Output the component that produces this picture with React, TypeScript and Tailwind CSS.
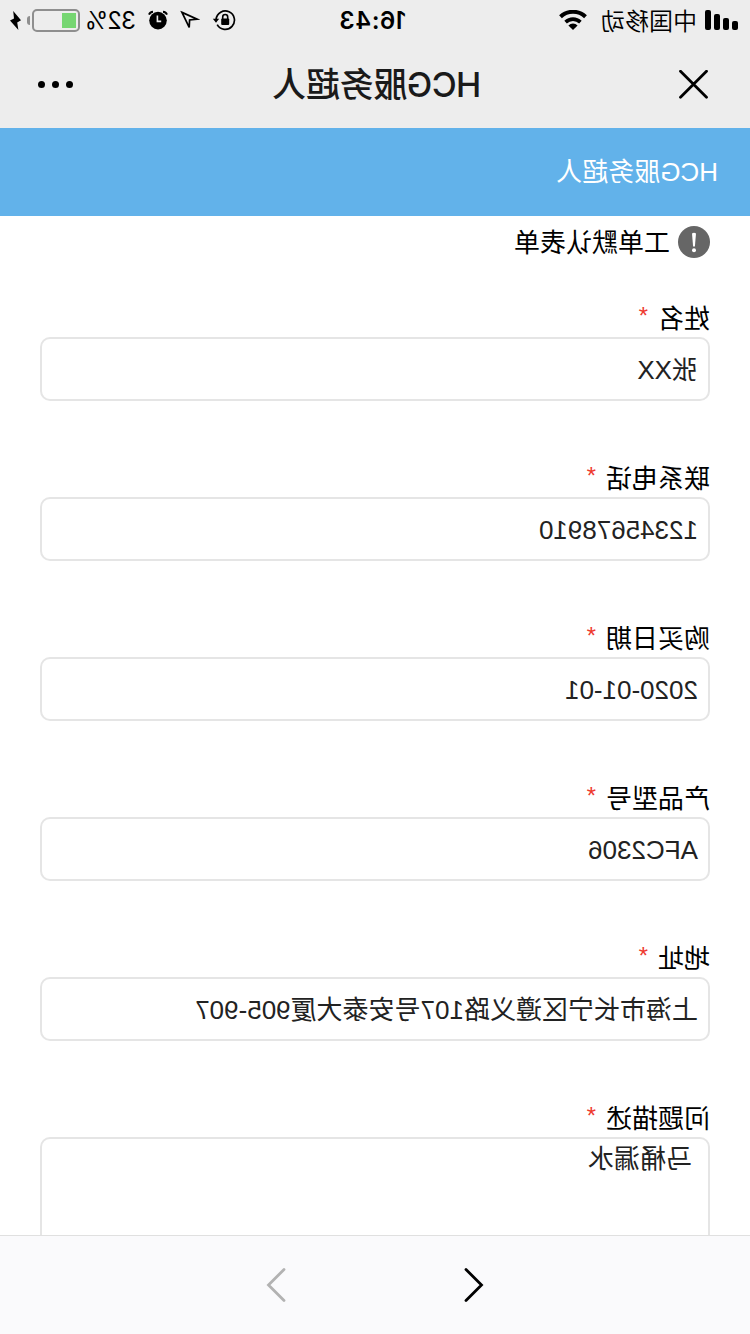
import type { ReactNode } from "react";

const fields = [
  { label: "姓名", value: "张XX" },
  { label: "联系电话", value: "12345678910" },
  { label: "购买日期", value: "2020-01-01" },
  { label: "产品型号", value: "AFC2306" },
  { label: "地址", value: "上海市长宁区遵义路107号安泰大厦905-907" },
];

function StatusBar() {
  return (
    <div className="flex h-10 items-center text-2xl leading-10 text-black">
      <div className="ml-3 flex h-5 items-end gap-[3px]">
        <span className="h-[9px] w-1.5 rounded-[2px] bg-black" />
        <span className="h-3 w-1.5 rounded-[2px] bg-black" />
        <span className="h-4 w-1.5 rounded-[2px] bg-black" />
        <span className="h-5 w-1.5 rounded-[2px] bg-black" />
      </div>
      <span className="ml-2 w-[96px] pt-[3px] font-[350] whitespace-nowrap">中国移动</span>
      <svg className="ml-[14px] shrink-0" width="28" height="20" viewBox="0 0 28 20" fill="none">
        <path d="M1.5 6.8a18 18 0 0 1 25 0" stroke="#000" strokeWidth="4" />
        <path d="M6.6 12.1a10.6 10.6 0 0 1 14.8 0" stroke="#000" strokeWidth="3.6" />
        <path d="M14 20l-4.6-4.6a6.4 6.4 0 0 1 9.2 0z" fill="#000" />
      </svg>
      <span className="ml-[153px] w-[68px] pt-0.5 font-['Inter',sans-serif] font-semibold tracking-[0.5px] whitespace-nowrap">
        16:43
      </span>
      <svg className="ml-[102px] shrink-0" width="24" height="24" viewBox="0 0 24 24" fill="none">
        <path d="M18.8 16.6a9.2 9.2 0 1 1 1.1-5.4" stroke="#000" strokeWidth="1.7" />
        <path d="M16.8 10.8h6.4l-3.2 4z" fill="#000" />
        <path d="M8.3 11.5V9a2.5 2.5 0 0 1 5 0v2.5" stroke="#000" strokeWidth="1.6" />
        <rect x="6.8" y="10.4" width="8" height="6.6" rx="1" fill="#000" />
      </svg>
      <svg className="ml-[12px] shrink-0" width="20" height="20" viewBox="0 0 20 20" fill="none">
        <path d="M18 2.4L2.8 9.2l7.6.8.4 7.4z" stroke="#000" strokeWidth="1.7" />
      </svg>
      <svg className="ml-[12px] shrink-0" width="20" height="20" viewBox="0 0 20 20" fill="none">
        <circle cx="10" cy="10.6" r="8.8" fill="#000" />
        <path d="M1 4.6Q2 2 5 1.8M19 4.6Q18 2 15 1.8" stroke="#000" strokeWidth="1.9" />
        <path d="M10.6 5.4v6H6.8" stroke="#ededed" strokeWidth="1.6" />
      </svg>
      <span className="ml-[12px] w-[56px] pt-0.5 font-['Inter',sans-serif] tracking-[-0.9px] whitespace-nowrap">32%</span>
      <div className="mt-px h-[23px] w-12 shrink-0 rounded-[5px] border-2 border-[#8e8e8e] p-[2px]">
        <div className="h-[15px] w-[14px] bg-[#76d672]" />
      </div>
      <span className="mt-px ml-[2px] h-[9px] w-[3px] rounded-r-full bg-[#8e8e8e]" />
      <svg className="ml-[6px] shrink-0" width="11" height="19" viewBox="0 0 11 19">
        <path d="M7.8 0L7 7.6l4 1.9L2.6 19l1.2-7.4L0 9.2z" fill="#000" />
      </svg>
    </div>
  );
}

function NavBar() {
  return (
    <div className="flex h-[88px] items-center justify-between pr-[38px] pl-[42px]">
      <svg width="29" height="29" viewBox="0 0 29 29">
        <path d="M1.5 1.2l26 26M27.5 1.2l-26 26" stroke="#000" strokeWidth="2.8" strokeLinecap="round" />
      </svg>
      <h1 className="mr-0.5 pt-px font-['Inter','Noto_Sans_CJK_SC',sans-serif] text-[34px] leading-[88px] font-medium tracking-[-0.3px] text-[#1a1a1a]">
        <span className="tracking-[-0.6px]">HCG</span>服务超人
      </h1>
      <div className="flex gap-[7px]">
        <span className="size-[7px] rounded-full bg-black" />
        <span className="size-[7px] rounded-full bg-black" />
        <span className="size-[7px] rounded-full bg-black" />
      </div>
    </div>
  );
}

function Field({ label, children }: { label: string; children: ReactNode }) {
  return (
    <div className="mb-14">
      <div className="flex h-10 items-start leading-[44px]">
        <span>{label}</span>
        <span className="ml-[10px] text-2xl leading-[38px] font-medium text-[#ee3a30]">*</span>
      </div>
      {children}
    </div>
  );
}

export default function App() {
  return (
    <div className="flex h-[1334px] w-[750px] -scale-x-100 flex-col overflow-hidden bg-white font-['Liberation_Sans','Noto_Sans_CJK_SC',sans-serif] text-[26px] text-black">
      <header className="h-32 shrink-0 bg-[#ededed]">
        <StatusBar />
        <NavBar />
      </header>
      <div className="h-[88px] shrink-0 bg-[#62b2ea] px-8 leading-[88px] text-white">HCG服务超人</div>

      <main className="min-h-0 flex-1 overflow-hidden px-10">
        <div className="mb-[29px] flex h-[52px] items-center gap-2">
          <svg width="32" height="32" viewBox="0 0 32 32">
            <circle cx="16" cy="16" r="16" fill="#666" />
            <path d="M14 7.6q2-1.8 4 0l-1.1 12.8h-1.8z" fill="#fff" />
            <circle cx="16" cy="24.3" r="2" fill="#fff" />
          </svg>
          <span className="pt-[3px]">工单默认表单</span>
        </div>
        {fields.map((f) => (
          <Field key={f.label} label={f.label}>
            <div className="h-16 rounded-[10px] border-2 border-[#e5e5e5] px-[10px] leading-[62px] text-[#222]">
              {f.value}
            </div>
          </Field>
        ))}
        <Field label="问题描述">
          <div className="h-40 rounded-[10px] border-2 border-[#e5e5e5] px-4 leading-[40px] text-[#222]">马桶漏水</div>
        </Field>
      </main>

      <footer className="flex h-[99px] shrink-0 items-center justify-center gap-[178px] border-t border-[#e0e0e0] bg-[#fafafc]">
        <svg width="20" height="34" viewBox="0 0 20 34" fill="none">
          <path d="M18 1.5L2.5 17 18 32.5" stroke="#000" strokeWidth="2.8" strokeLinecap="round" />
        </svg>
        <svg width="20" height="34" viewBox="0 0 20 34" fill="none">
          <path d="M2 1.5L17.5 17 2 32.5" stroke="#b2b2b2" strokeWidth="2.8" strokeLinecap="round" />
        </svg>
      </footer>
    </div>
  );
}
